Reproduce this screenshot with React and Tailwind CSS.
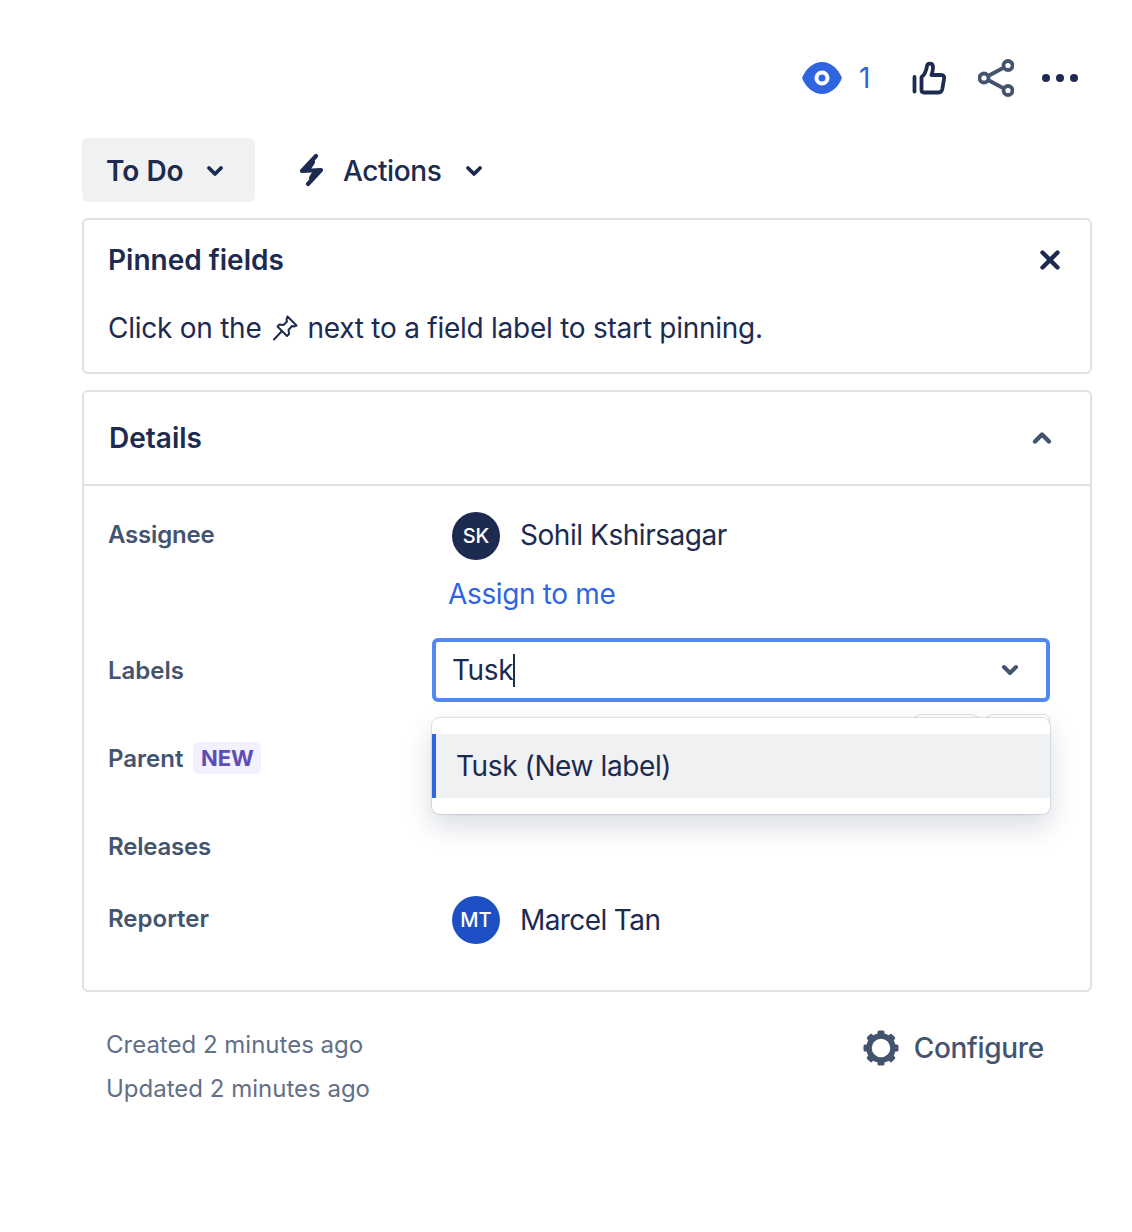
import { ChevronDown, ChevronUp, X } from "lucide-react";

const font = { fontFamily: "Inter, sans-serif" };

function EyeIcon() {
  return (
    <svg width="40" height="32" viewBox="0 0 40 32">
      <path d="M0 16C4 6 12 0 20 0s16 6 20 16c-4 10-12 16-20 16S4 26 0 16z" fill="#2f66e0" />
      <circle cx="20" cy="16" r="5.5" fill="none" stroke="#fff" strokeWidth="4" />
    </svg>
  );
}

function ThumbIcon() {
  return (
    <svg width="34" height="34" viewBox="0 0 34 34" fill="none" stroke="#1c2b4f" strokeWidth="3.800" strokeLinecap="round" strokeLinejoin="round">
      <path d="M2.500 16v14.500" />
      <path d="M9.500 16c3-2 4.800-6.500 5.500-11 .4-2.800 5-3.300 5.800-.3.700 2.800-.3 6.300-1.300 9.300h9.500c2.500 0 3.500 1.500 3.100 3.500l-1.800 10.500c-.4 2-1.500 3.500-3.500 3.500H12c-1.800 0-2.500-1-2.500-2.500z" />
    </svg>
  );
}

function ShareIcon() {
  return (
    <svg width="36" height="38" viewBox="0 0 36 38" fill="none" stroke="#44546f" strokeWidth="3.800">
      <circle cx="6" cy="19" r="4.500" />
      <circle cx="30" cy="6.500" r="4.500" />
      <circle cx="30" cy="31.500" r="4.500" />
      <path d="M10 17 26 8.500M10 21 26 29.500" />
    </svg>
  );
}

function BoltIcon() {
  return (
    <svg width="26" height="34" viewBox="0 0 26 34" fill="none" stroke="#1c2b4f" strokeWidth="4.200" strokeLinecap="round" strokeLinejoin="round">
      <path d="M17 3 3 18l19-1L9 31" />
      <path d="M14 9 9.500 16M15.500 19 12 25" />
    </svg>
  );
}

function PinIcon() {
  return (
    <svg width="26" height="26" viewBox="0 0 26 26" fill="none" stroke="#1c2b4f" strokeWidth="2" strokeLinejoin="round" strokeLinecap="round">
      <path d="M15.500 1.500 24.500 10.500l-2.500 1-2-.5-3.500 4 .5 4-2 2-9.500-9.500 2-2 4 .5 3.500-3.500-.5-2z" />
      <path d="M9.500 16.500 2 24.500" />
    </svg>
  );
}

function GearIcon() {
  const teeth = [0, 45, 90, 135, 180, 225, 270, 315];
  return (
    <svg width="36" height="36" viewBox="0 0 36 36">
      <circle cx="18" cy="18" r="12" fill="none" stroke="#44546f" strokeWidth="5.500" />
      {teeth.map((angle) => (
        <rect key={angle} x="14.500" y="0.500" width="7" height="7" rx="1.500" fill="#44546f" transform={`rotate(${angle} 18 18)`} />
      ))}
    </svg>
  );
}

function Avatar({ initials, color }) {
  return (
    <div className={`flex h-12 w-12 shrink-0 items-center justify-center rounded-full text-[20px] font-medium text-white ${color}`}>
      {initials}
    </div>
  );
}

function FieldLabel({ children, className = "" }) {
  return (
    <div className={`w-[348px] shrink-0 pl-[24px] text-[24px] font-semibold text-[#44546f] ${className}`}>
      {children}
    </div>
  );
}

export default function App() {
  return (
    <div className="h-[1232px] w-[1132px] bg-white text-[#1c2b4f]" style={font}>
      <div className="flex h-[138px] items-start justify-end pr-[54px] pt-[60px]">
        <div className="flex h-9 items-center">
          <EyeIcon />
          <span className="ml-[17px] w-[12px] text-[28px] text-[#2f66e0]">1</span>
          <div className="ml-[41px]"><ThumbIcon /></div>
          <div className="ml-[32px]"><ShareIcon /></div>
          <div className="ml-[28px] flex gap-[6px]">
            <span className="h-2 w-2 rounded-full bg-[#1c2b4f]" />
            <span className="h-2 w-2 rounded-full bg-[#1c2b4f]" />
            <span className="h-2 w-2 rounded-full bg-[#1c2b4f]" />
          </div>
        </div>
      </div>

      <div className="ml-[82px] w-[1010px]">
        <div className="flex h-16 items-center">
          <div className="flex h-16 w-[173px] items-center rounded-md bg-[#f0f1f3] pl-[24px] pt-[2px]">
            <span className="text-[28px] font-semibold">To Do</span>
            <ChevronDown className="ml-[19px]" size={24} strokeWidth={3.800} />
          </div>
          <div className="ml-[44px] flex items-center">
            <BoltIcon />
            <div className="ml-[18px] flex items-center pt-[2px]">
              <span className="text-[28px] font-medium tracking-[-0.4px]">Actions</span>
              <ChevronDown className="ml-[21px]" size={24} strokeWidth={3.800} />
            </div>
          </div>
        </div>

        <div className="mt-4 h-[156px] rounded-md border-2 border-[#dfe1e6] pl-[24px] pr-[25px] pt-[20px]">
          <div className="flex items-center justify-between">
            <h2 className="text-[28px] font-semibold leading-10">Pinned fields</h2>
            <X size={30} strokeWidth={3.500} />
          </div>
          <p className="mt-[28px] flex items-center text-[28px] leading-10 tracking-[-0.25px]">
            Click on the
            <span className="ml-[10px] mr-[10px]"><PinIcon /></span>
            next to a field label to start pinning.
          </p>
        </div>

        <div className="relative mt-4 h-[602px] rounded-md border-2 border-[#dfe1e6]">
          <div className="flex h-[94px] items-center justify-between border-b-2 border-[#dfe1e6] pl-[25px] pr-[34px]">
            <h2 className="text-[28px] font-semibold">Details</h2>
            <ChevronUp className="text-[#44546f]" size={28} strokeWidth={3.800} />
          </div>

          <div className="mt-[26px] flex h-12 items-center">
            <FieldLabel className="pb-[2px] tracking-[-0.2px]">Assignee</FieldLabel>
            <div className="ml-[20px] flex items-center">
              <Avatar initials="SK" color="bg-[#1c2b4f]" />
              <span className="ml-[20px] pb-[2px] text-[28px] tracking-[-0.45px]">Sohil Kshirsagar</span>
            </div>
          </div>
          <div className="mt-4 flex h-9 items-center pl-[364px] text-[28px] tracking-[-0.35px] text-[#2f66e0]">Assign to me</div>

          <div className="mt-[26px] flex h-16 items-center">
            <FieldLabel className="pt-[2px]">Labels</FieldLabel>
            <div className="flex h-16 w-[618px] items-center justify-between rounded-md border-4 border-[#5289ef] pl-[16px] pr-[24px]">
              <span className="border-r-2 border-[#1c2b4f] text-[28px] leading-[33px] tracking-[-0.4px]">Tusk</span>
              <ChevronDown className="text-[#44546f]" size={24} strokeWidth={4} />
            </div>
          </div>

          <div className="mt-8 flex h-12 items-center">
            <FieldLabel className="pt-[2px]">
              <span className="flex items-center">
                Parent
                <span className="mb-[2px] ml-[10px] flex h-8 w-[68px] items-center justify-center rounded-md bg-[#f3f0ff] text-[22px] font-bold text-[#5e4db2]">NEW</span>
              </span>
            </FieldLabel>
          </div>

          <div className="mt-10 flex h-12 items-center">
            <FieldLabel className="pt-[2px] tracking-[-0.2px]">Releases</FieldLabel>
          </div>

          <div className="mt-[26px] flex h-12 items-center">
            <FieldLabel className="pb-[2px]">Reporter</FieldLabel>
            <div className="ml-[20px] flex items-center">
              <Avatar initials="MT" color="bg-[#1f4fc4]" />
              <span className="ml-[20px] text-[28px] tracking-[-0.6px]">Marcel Tan</span>
            </div>
          </div>

          <div className="absolute left-[830px] top-[322px] flex gap-2">
            <div className="h-12 w-[64px] rounded-md border border-[#dfe1e6]" />
            <div className="h-12 w-[64px] rounded-md border border-[#dfe1e6]" />
          </div>
          <div className="absolute left-[348px] top-[326px] w-[618px] overflow-hidden rounded-lg bg-white py-4 shadow-[0_0_1px_1px_rgba(9,30,66,0.12),0_12px_28px_rgba(9,30,66,0.16)]">
            <div className="flex h-16 items-center border-l-4 border-[#2f66e0] bg-[#f0f1f3] pl-[20px] text-[28px] tracking-[-0.4px]">Tusk (New label)</div>
          </div>
        </div>

        <div className="flex items-start justify-between pl-[24px] pr-[48px] pt-[31px]">
          <div className="text-[24px] leading-[44px] text-[#626f86]">
            <p>Created 2 minutes ago</p>
            <p>Updated 2 minutes ago</p>
          </div>
          <div className="flex items-center pt-[4px] text-[28px] font-medium tracking-[-0.3px] text-[#44546f]">
            <GearIcon />
            <span className="ml-[15px]">Configure</span>
          </div>
        </div>
      </div>
    </div>
  );
}
